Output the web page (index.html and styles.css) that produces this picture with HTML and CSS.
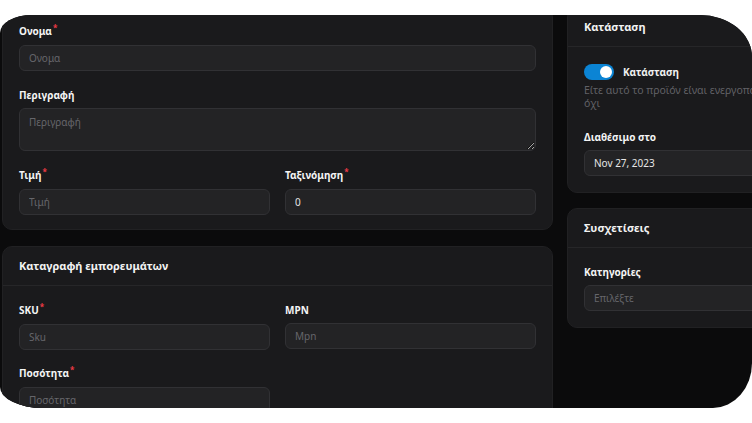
FILE: index.html
```html
<!DOCTYPE html>
<html lang="el">

<head>
  <meta charset="UTF-8">
  <title>Προϊόν</title>
  <link rel="stylesheet" href="styles.css">
</head>

<body>
  <div class="frame">
    <div class="page">
      <div class="main-col">
        <section class="card">
          <div class="card-body">
            <div class="field">
              <label class="label">Ονομα<span class="req">*</span></label>
              <input class="input" placeholder="Ονομα">
            </div>
            <div class="field">
              <label class="label">Περιγραφή</label>
              <textarea class="input textarea" placeholder="Περιγραφή"></textarea>
            </div>
            <div class="row">
              <div class="field">
                <label class="label">Τιμή<span class="req">*</span></label>
                <input class="input" placeholder="Τιμή">
              </div>
              <div class="field">
                <label class="label">Ταξινόμηση<span class="req">*</span></label>
                <input class="input" value="0">
              </div>
            </div>
          </div>
        </section>

        <section class="card">
          <div class="card-head">Καταγραφή εμπορευμάτων</div>
          <div class="card-body">
            <div class="row">
              <div class="field">
                <label class="label">SKU<span class="req">*</span></label>
                <input class="input" placeholder="Sku">
              </div>
              <div class="field">
                <label class="label">MPN</label>
                <input class="input" placeholder="Mpn">
              </div>
            </div>
            <div class="row">
              <div class="field">
                <label class="label">Ποσότητα<span class="req">*</span></label>
                <input class="input" placeholder="Ποσότητα">
              </div>
            </div>
          </div>
        </section>
      </div>

      <div class="side-col">
        <section class="card">
          <div class="card-head">Κατάσταση</div>
          <div class="card-body">
            <div class="switch-row">
              <span class="switch"><span class="knob"></span></span>
              <span class="switch-label">Κατάσταση</span>
            </div>
            <p class="hint">Είτε αυτό το προϊόν είναι ενεργοποιημένο ή όχι</p>
            <div class="field">
              <label class="label">Διαθέσιμο στο</label>
              <div class="input date">Nov 27, 2023</div>
            </div>
          </div>
        </section>

        <section class="card">
          <div class="card-head">Συσχετίσεις</div>
          <div class="card-body">
            <div class="field">
              <label class="label">Κατηγορίες</label>
              <input class="input" placeholder="Επιλέξτε">
            </div>
          </div>
        </section>
      </div>
    </div>
  </div>
</body>

</html>
```

FILE: styles.css
```css
* {
  box-sizing: border-box;
}
body {
  margin: 0;
  background: #ffffff;
  font-family: "Noto Sans", "DejaVu Sans", sans-serif;
}
.frame {
  margin-top: 15px;
  width: 752px;
  height: 393px;
  background-color: #0b0b0c;
  border-radius: 32px 52px 39px 43px / 18px 42px 45px 21px;
  overflow: hidden;
}
.page {
  display: grid;
  grid-template-columns: 551px 300px;
  column-gap: 14px;
  margin: -8px 0 0 2px;
}
.main-col,
.side-col {
  display: flex;
  flex-direction: column;
  gap: 16px;
}
.side-col {
  gap: 15px;
}
.card {
  background-color: #1a1a1c;
  border: 1px solid #212123;
  border-radius: 10px;
}
.card-head {
  padding: 11px 16px 12px;
  line-height: 15px;
  font-size: 11px;
  font-weight: 700;
  color: #f2f2f2;
  border-bottom: 1px solid #262628;
}
.card-body {
  padding: 16px 16px 14px;
  display: flex;
  flex-direction: column;
  gap: 17px;
}
.card-head + .card-body {
  padding-top: 17px;
  gap: 16px;
}
.side-col .card-body {
  padding-left: 16px;
  padding-right: 16px;
  padding-bottom: 16px;
  gap: 0;
}
.field {
  display: flex;
  flex-direction: column;
  gap: 6px;
}
.row {
  display: grid;
  grid-template-columns: 1fr 1fr;
  gap: 15px;
}
.label {
  line-height: 14px;
  font-size: 10px;
  font-weight: 700;
  color: #f4f4f4;
}
.req {
  position: relative;
  top: -4px;
  margin-left: 1px;
  font-size: 8px;
  color: #ee3b46;
}
.input {
  display: block;
  width: 100%;
  height: 26px;
  padding: 0 9px;
  background-color: #232325;
  border: 1px solid #313134;
  border-radius: 6px;
  font-family: inherit;
  font-size: 10px;
  color: #e4e4e4;
  outline: none;
}
.input::placeholder {
  color: #66666b;
}
.textarea {
  height: 43px;
  padding-top: 6px;
  resize: vertical;
}
.date {
  line-height: 24px;
  color: #e6e6e6;
}
.switch-row {
  display: flex;
  align-items: center;
  gap: 9px;
}
.switch {
  display: flex;
  justify-content: flex-end;
  align-items: center;
  width: 30px;
  height: 16px;
  padding: 2px;
  background-color: #0b84d4;
  border-radius: 8px;
}
.knob {
  width: 12px;
  height: 12px;
  background: #ffffff;
  border-radius: 50%;
}
.switch-label {
  font-size: 10px;
  font-weight: 700;
  color: #f0f0f0;
}
.hint {
  margin: 4px 0 20px;
  width: 225px;
  line-height: 13px;
  font-size: 10.5px;
  color: #616166;
}
```
